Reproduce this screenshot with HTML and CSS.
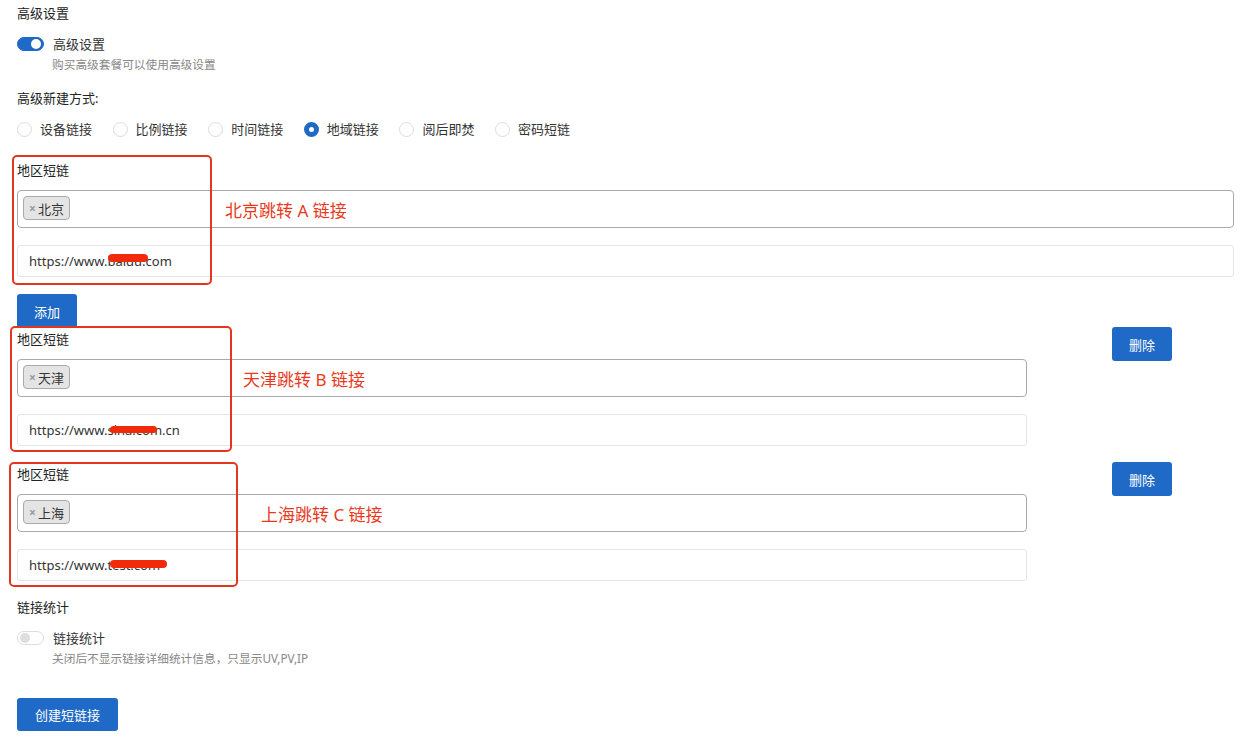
FILE: index.html
```html
<!DOCTYPE html>
<html>
<head>
	<meta charset="utf-8">
	<title>高级设置</title>
	<link rel="stylesheet" href="styles.css">
</head>
<body>
	<div class="page">
		<div class="section-title">高级设置</div>
		<div class="switch-row">
			<span class="switch on"></span>
			<span class="switch-label">高级设置</span>
		</div>
		<div class="help">购买高级套餐可以使用高级设置</div>

		<div class="section-title mode-title">高级新建方式:</div>
		<div class="radios">
			<label class="radio"><span class="dot"></span>设备链接</label>
			<label class="radio"><span class="dot"></span>比例链接</label>
			<label class="radio"><span class="dot"></span>时间链接</label>
			<label class="radio"><span class="dot checked"></span>地域链接</label>
			<label class="radio"><span class="dot"></span>阅后即焚</label>
			<label class="radio"><span class="dot"></span>密码短链</label>
		</div>

		<div class="rule rule-first">
			<div class="rule-main wide">
				<div class="field-label">地区短链</div>
				<div class="tags">
					<span class="tag"><span class="tag-x">×</span>北京</span>
					<span class="note note-a">北京跳转 A 链接</span>
				</div>
				<div class="url">
					<input class="url-input" type="text" value="https://www.baidu.com">
					<span class="mask mask-a"></span>
				</div>
			</div>
			<span class="mark mark-a"></span>
		</div>
		<button class="btn btn-add">添加</button>

		<div class="rule rule-second">
			<div class="rule-main">
				<div class="field-label">地区短链</div>
				<div class="tags">
					<span class="tag"><span class="tag-x">×</span>天津</span>
					<span class="note note-b">天津跳转 B 链接</span>
				</div>
				<div class="url">
					<input class="url-input" type="text" value="https://www.sina.com.cn">
					<span class="mask mask-b"></span>
				</div>
			</div>
			<div class="rule-side"><button class="btn btn-del">删除</button></div>
			<span class="mark mark-b"></span>
		</div>

		<div class="rule rule-third">
			<div class="rule-main">
				<div class="field-label">地区短链</div>
				<div class="tags">
					<span class="tag"><span class="tag-x">×</span>上海</span>
					<span class="note note-c">上海跳转 C 链接</span>
				</div>
				<div class="url">
					<input class="url-input" type="text" value="https://www.test.com">
					<span class="mask mask-c"></span>
				</div>
			</div>
			<div class="rule-side"><button class="btn btn-del">删除</button></div>
			<span class="mark mark-c"></span>
		</div>

		<div class="section-title stats-title">链接统计</div>
		<div class="switch-row">
			<span class="switch"></span>
			<span class="switch-label">链接统计</span>
		</div>
		<div class="help">关闭后不显示链接详细统计信息，只显示UV,PV,IP</div>

		<button class="btn btn-create">创建短链接</button>
	</div>
</body>
</html>
```

FILE: styles.css
```css
body {
	margin: 0;
	padding: 0;
	background-color: #fff;
	font-family: "Noto Sans", "Noto Sans CJK SC", sans-serif;
	font-size: 13px;
	color: #333;
}
.page {
	padding: 3px 8px 0 17px;
}
.section-title {
	line-height: 20px;
	color: #222;
}
.mode-title {
	margin-top: 16px;
}
.stats-title {
	margin-top: 16px;
}
.switch-row {
	display: flex;
	align-items: center;
	margin-top: 11px;
	line-height: 20px;
}
.switch {
	position: relative;
	box-sizing: border-box;
	width: 27px;
	height: 14px;
	border-radius: 7px;
	border: 1px solid #dcdcdc;
	background-color: #fff;
}
.switch::after {
	content: "";
	position: absolute;
	top: 1px;
	left: 2px;
	width: 10px;
	height: 10px;
	border-radius: 50%;
	background-color: #dedede;
}
.switch.on {
	border-color: #1f6ac6;
	background-color: #1f6ac6;
}
.switch.on::after {
	left: auto;
	right: 2px;
	background-color: #fff;
}
.switch-label {
	margin-left: 9px;
	color: #333;
}
.help {
	margin-top: 2px;
	margin-left: 35px;
	line-height: 16px;
	font-size: 11.7px;
	color: #888;
}
.radios {
	display: flex;
	margin-top: 11px;
	line-height: 20px;
}
.radio {
	display: flex;
	align-items: center;
	margin-right: 20.6px;
	color: #333;
}
.dot {
	box-sizing: border-box;
	width: 15px;
	height: 15px;
	margin-right: 8px;
	border-radius: 50%;
	border: 1px solid #dcdcdc;
	background-color: #fff;
}
.dot.checked {
	border: 5px solid #1f6ac6;
}
.rule {
	position: relative;
	display: flex;
	align-items: flex-start;
}
.rule-first {
	margin-top: 21px;
}
.rule-second {
	margin-top: 1px;
}
.rule-third {
	margin-top: 18px;
}
.rule-main {
	width: 1010px;
}
.rule-main.wide {
	width: 100%;
}
.rule-side {
	margin-left: 85px;
	margin-top: -2px;
}
.field-label {
	line-height: 20px;
	color: #222;
	margin-bottom: 10px;
}
.tags {
	position: relative;
	box-sizing: border-box;
	height: 38px;
	padding: 5px;
	border: 1px solid #aaa;
	border-radius: 4px;
	background-color: #fff;
}
.tag {
	display: inline-flex;
	align-items: center;
	box-sizing: border-box;
	height: 24px;
	padding: 0 5px;
	border: 1px solid #aaa;
	border-radius: 4px;
	background-color: #e4e4e4;
	color: #333;
}
.tag-x {
	margin-right: 2px;
	color: #999;
	font-weight: bold;
	font-size: 12px;
}
.note {
	position: absolute;
	top: 50%;
	transform: translateY(-50%);
	font-size: 17px;
	color: #e8391d;
}
.note-a {
	left: 207px;
}
.note-b {
	left: 225px;
}
.note-c {
	left: 243px;
}
.url {
	position: relative;
	margin-top: 17px;
}
.url-input {
	display: block;
	box-sizing: border-box;
	width: 100%;
	height: 32px;
	padding: 0 11px;
	border: 1px solid #e6e6e6;
	border-radius: 3px;
	font-family: inherit;
	font-size: 13px;
	color: #333;
	outline: none;
}
.mask {
	position: absolute;
	height: 8px;
	border-radius: 4px;
	background-color: #f22a0c;
}
.mask-a {
	left: 91px;
	top: 9px;
	width: 40px;
}
.mask-b {
	left: 93px;
	top: 12px;
	width: 47px;
	height: 7px;
}
.mask-c {
	left: 93px;
	top: 11px;
	width: 57px;
}
.mark {
	position: absolute;
	box-sizing: border-box;
	border: 2px solid #e5341f;
	border-radius: 5px;
	pointer-events: none;
}
.mark-a {
	left: -5px;
	top: -5px;
	width: 200px;
	height: 130px;
}
.mark-b {
	left: -7px;
	top: -3px;
	width: 222px;
	height: 126px;
}
.mark-c {
	left: -8px;
	top: -2px;
	width: 229px;
	height: 125px;
}
.btn {
	display: block;
	box-sizing: border-box;
	border: none;
	border-radius: 3px;
	background-color: #1f6ac6;
	color: #fff;
	font-family: inherit;
	font-size: 13px;
	cursor: pointer;
}
.btn-add {
	width: 60px;
	height: 34px;
	margin-top: 17px;
}
.btn-del {
	width: 60px;
	height: 34px;
}
.btn-create {
	width: 101px;
	height: 33px;
	margin-top: 32px;
}
```
